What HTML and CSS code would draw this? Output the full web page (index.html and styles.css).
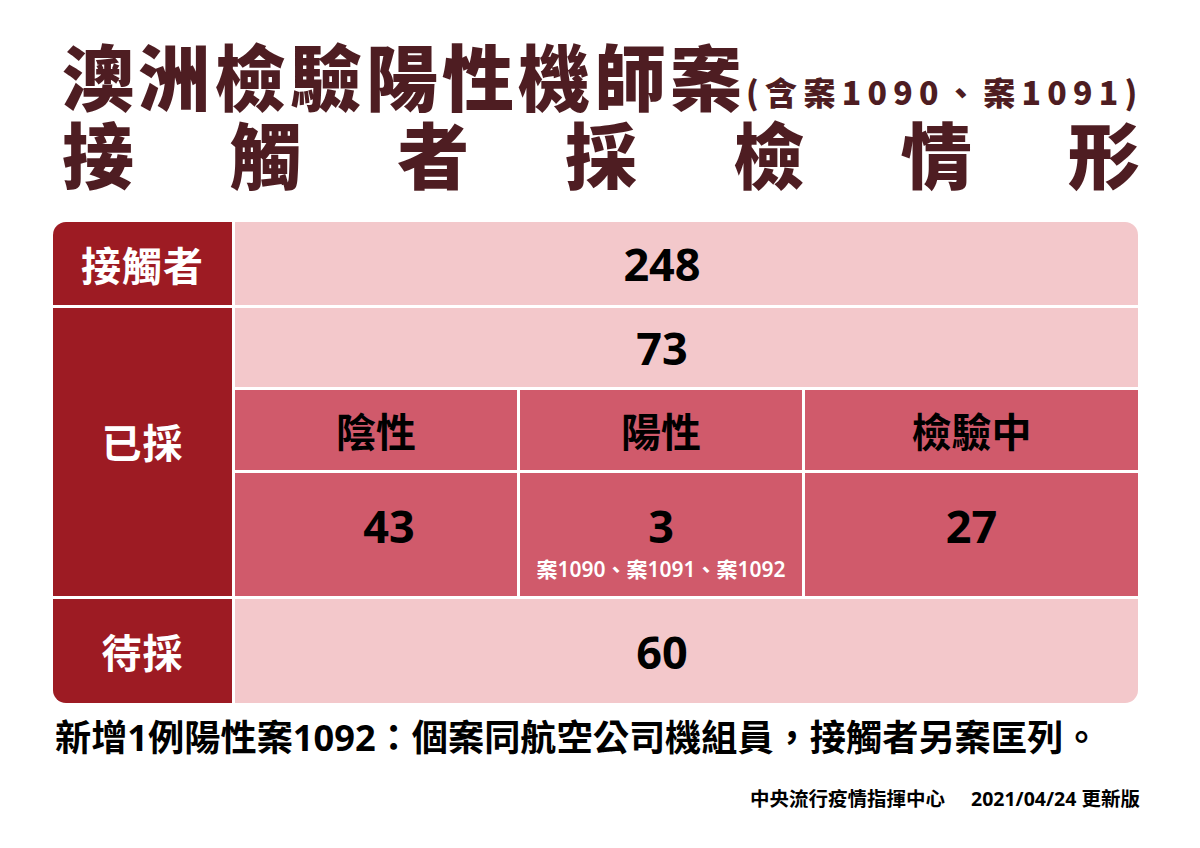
FILE: index.html
```html
<!DOCTYPE html>
<html lang="zh-Hant">
<head>
<meta charset="utf-8">
<title>澳洲檢驗陽性機師案 接觸者採檢情形</title>
<link rel="stylesheet" href="styles.css">
</head>
<body>
<div class="page">
  <header class="header">
    <h1 class="title-line1"><span class="big">澳洲檢驗陽性機師案</span><span class="paren">(含案1090、案1091)</span></h1>
    <h2 class="title-line2"><span>接</span><span>觸</span><span>者</span><span>採</span><span>檢</span><span>情</span><span>形</span></h2>
  </header>

  <section class="table">
    <div class="label">接觸者</div>
    <div class="cell light num wide">248</div>

    <div class="label label-mid">已採</div>
    <div class="sampled">
      <div class="cell light num span3">73</div>
      <div class="cell mid head">陰性</div>
      <div class="cell mid head">陽性</div>
      <div class="cell mid head">檢驗中</div>
      <div class="cell mid data data-neg"><span class="num">43</span></div>
      <div class="cell mid data"><span class="num">3</span><span class="cases">案1090、案1091、案1092</span></div>
      <div class="cell mid data"><span class="num">27</span></div>
    </div>

    <div class="label">待採</div>
    <div class="cell light num wide">60</div>
  </section>

  <p class="note">新增1例陽性案1092：個案同航空公司機組員，接觸者另案匡列。</p>
  <p class="footer">中央流行疫情指揮中心<span class="gap"></span>2021/04/24 更新版</p>
</div>
</body>
</html>
```

FILE: styles.css
```css
* { box-sizing: border-box; }
html, body { margin: 0; padding: 0; background: #ffffff; }
body {
  font-family: "Noto Sans", "Noto Sans CJK TC", sans-serif;
  color: #000;
}
.page {
  width: 1200px;
  height: 848px;
  padding: 36px 40px 0 53px;
}
.header { padding-left: 9px; }
.title-line1 {
  margin: 0;
  display: flex;
  align-items: baseline;
  flex-wrap: nowrap;
  white-space: nowrap;
  color: #4e1d22;
  font-family: "Noto Sans CJK TC", sans-serif;
  font-weight: 900;
  line-height: 76px;
  height: 76px;
}
.big { flex-shrink: 0; font-size: 72px; letter-spacing: 4px; line-height: 76px; }
.paren { flex-shrink: 0; font-size: 32px; letter-spacing: 6.3px; line-height: 40px; }
.title-line2 {
  margin: 0;
  display: flex;
  justify-content: space-between;
  width: 1078px;
  white-space: nowrap;
  color: #4e1d22;
  font-family: "Noto Sans CJK TC", sans-serif;
  font-weight: 900;
  font-size: 72px;
  line-height: 80px;
  height: 80px;
}

.table {
  margin-top: 30px;
  width: 1085px;
  display: grid;
  grid-template-columns: 179px 1fr;
  grid-template-rows: 83px 288px 104px;
  gap: 3px;
  border-radius: 13px;
  overflow: hidden;
}
.label {
  background: #9d1b23;
  color: #fff;
  font-family: "Noto Sans CJK TC", sans-serif;
  font-weight: 700;
  font-size: 40px;
  letter-spacing: 1px;
  display: flex;
  align-items: center;
  justify-content: center;
}
.label-mid { padding-bottom: 22px; }
.cell {
  display: flex;
  align-items: center;
  justify-content: center;
}
.light { background: #f3c8cb; }
.mid { background: #d05a6b; }
.wide { padding-right: 49px; }
.num {
  font-family: "Noto Sans", sans-serif;
  font-weight: 700;
  font-size: 45px;
  line-height: 1;
}
.sampled {
  display: grid;
  grid-template-columns: 282px 282px 1fr;
  grid-template-rows: 79px 80px 123px;
  gap: 3px;
}
.span3 { grid-column: 1 / 4; padding-right: 49px; }
.head {
  font-family: "Noto Sans CJK TC", sans-serif;
  font-weight: 700;
  font-size: 40px;
}
.data {
  flex-direction: column;
  justify-content: flex-start;
  padding-top: 30px;
}
.data-neg { padding-left: 26px; }
.cases {
  margin-top: 11px;
  color: #fff;
  font-family: "Noto Sans", "Noto Sans CJK TC", sans-serif;
  font-weight: 600;
  font-size: 21px;
  line-height: 1;
  white-space: nowrap;
}
.note {
  margin: 10px 0 0 2px;
  white-space: nowrap;
  font-family: "Noto Sans", "Noto Sans CJK TC", sans-serif;
  font-weight: 700;
  font-size: 36.2px;
  line-height: 48px;
}
.footer {
  margin: 26px 0 0 0;
  width: 1087px;
  text-align: right;
  white-space: nowrap;
  font-family: "Noto Sans", "Noto Sans CJK TC", sans-serif;
  font-weight: 700;
  font-size: 19.5px;
  line-height: 24px;
}
.gap { display: inline-block; width: 26px; }
```
